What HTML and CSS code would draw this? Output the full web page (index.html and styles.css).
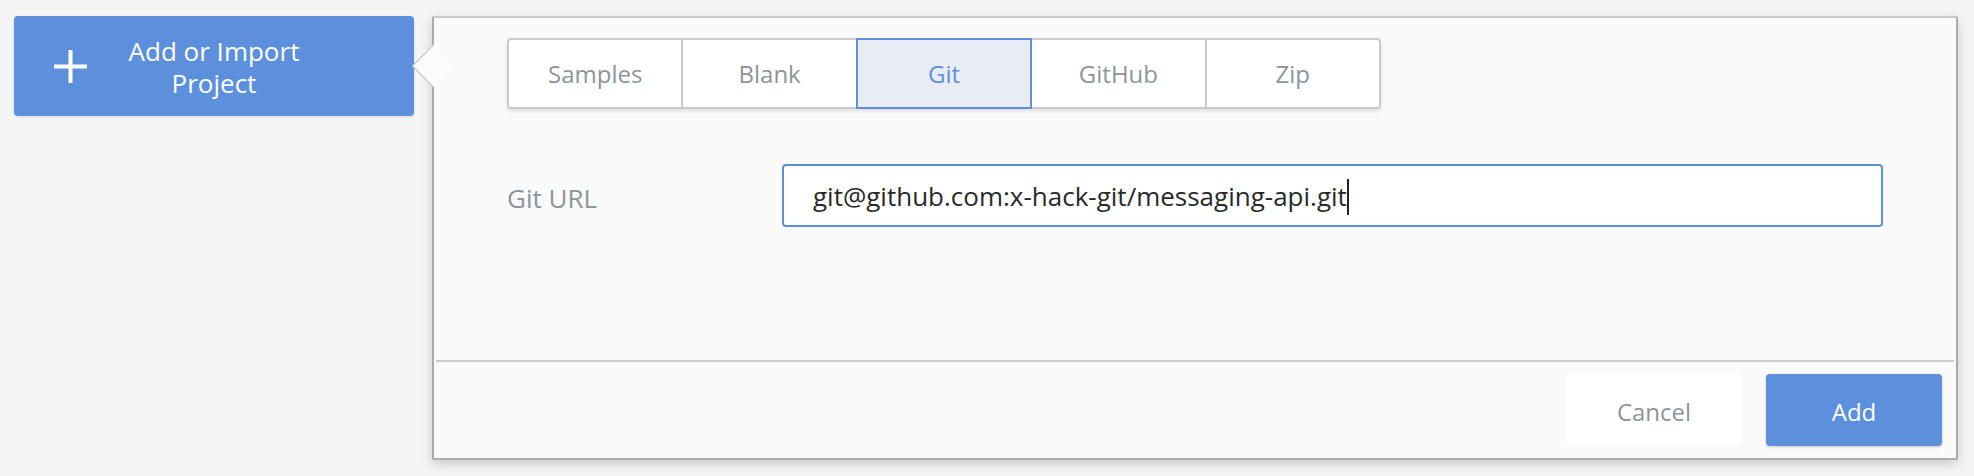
FILE: index.html
```html
<!DOCTYPE html>
<html>
<head>
<meta charset="utf-8">
<link rel="stylesheet" href="styles.css">
</head>
<body>
<div class="page">
  <div class="sidebar">
    <button class="add-project">
      <span class="plus">
        <svg width="33" height="33" viewBox="0 0 33 33"><path d="M16.5 0V33M0 16.5H33" stroke="#fff" stroke-width="4" fill="none"/></svg>
      </span>
      <span class="add-label">Add or Import<br>Project</span>
      <span></span>
    </button>
  </div>
  <div class="panel">
    <div class="arrow"></div>
    <div class="panel-body">
      <div class="tabs">
        <div class="tab">Samples</div>
        <div class="tab">Blank</div>
        <div class="tab active">Git</div>
        <div class="tab">GitHub</div>
        <div class="tab">Zip</div>
      </div>
      <div class="form-row">
        <label class="field-label">Git URL</label>
        <div class="field-input"><span class="value">git@github.com:x-hack-git/messaging-api.git</span><span class="caret"></span></div>
      </div>
    </div>
    <div class="panel-footer">
      <button class="btn btn-cancel">Cancel</button>
      <button class="btn btn-add">Add</button>
    </div>
  </div>
</div>
</body>
</html>
```
FILE: styles.css
```css
* { box-sizing: border-box; }
html, body { margin: 0; padding: 0; }
body {
  background: #f5f5f5;
  font-family: "Open Sans", "Liberation Sans", sans-serif;
  width: 1974px;
  height: 476px;
  overflow: hidden;
}
.page {
  display: flex;
  align-items: flex-start;
  padding: 16px 16px 0 14px;
  gap: 18px;
}
.sidebar { flex: none; }
.add-project {
  width: 400px;
  height: 100px;
  border: none;
  border-radius: 4px;
  background: #5d90dc;
  color: #fff;
  font-family: inherit;
  font-size: 26px;
  line-height: 32px;
  display: grid;
  grid-template-columns: 1fr auto 1fr;
  align-items: center;
  padding: 0;
  box-shadow: 0 1px 3px rgba(0,0,0,0.12);
}
.plus { padding-left: 40px; display: flex; justify-self: start; }
.plus svg { display: block; }
.add-label { text-align: center; padding-top: 1px; }
.panel {
  flex: 1;
  position: relative;
  background: #fafafa;
  border: 2px solid #ababab;
  border-top-color: #c8c8c8;
  border-radius: 2px;
  box-shadow: 0 4px 12px rgba(0,0,0,0.18);
}
.arrow {
  position: absolute;
  left: -16px;
  top: 33px;
  width: 30px;
  height: 30px;
  background: #fcfcfc;
  border-left: 1px solid #bdbdbd;
  border-bottom: 1px solid #bdbdbd;
  transform: rotate(45deg);
}
.panel-body {
  padding: 20px 73px 133px 73px;
}
.tabs {
  display: flex;
  width: 874px;
  height: 71px;
  border-radius: 4px;
  box-shadow: 0 2px 4px rgba(0,0,0,0.12);
}
.tab {
  flex: 1;
  display: flex;
  align-items: center;
  justify-content: center;
  background: #fff;
  border: 2px solid #cacaca;
  margin-left: -2px;
  font-size: 24px;
  color: #8e949a;
  padding-bottom: 1px;
}
.tab:first-child { margin-left: 0; border-radius: 4px 0 0 4px; }
.tab:last-child { border-radius: 0 4px 4px 0; }
.tab.active {
  position: relative;
  z-index: 1;
  background: #e9edf3;
  border-color: #5d90dc;
  color: #5d90dc;
}
.form-row {
  display: flex;
  align-items: center;
  margin-top: 55px;
}
.field-label {
  width: 275px;
  flex: none;
  font-size: 26px;
  color: #8e949a;
  padding-top: 4px;
  padding-left: 0;
}
.field-input {
  flex: 1;
  height: 63px;
  background: #fff;
  border: 2px solid #5d90dc;
  border-radius: 4px;
  padding-left: 29px;
  display: flex;
  align-items: center;
  font-size: 26px;
  color: #2a2a2a;
}
.caret {
  display: inline-block;
  width: 2px;
  height: 36px;
  background: #222;
  margin-top: 2px;
}
.panel-footer {
  margin: 0 2px;
  border-top: 2px solid #cbcbcb;
  padding: 12px;
  display: flex;
  justify-content: flex-end;
  gap: 24px;
}
.btn {
  width: 176px;
  height: 72px;
  border: none;
  border-radius: 4px;
  font-family: inherit;
  font-size: 24px;
  padding: 3px 0 0 0;
}
.btn-cancel { background: #fff; color: #8e949a; }
.btn-add { background: #5d90dc; color: #fff; box-shadow: 0 1px 3px rgba(0,0,0,0.2); }
```
